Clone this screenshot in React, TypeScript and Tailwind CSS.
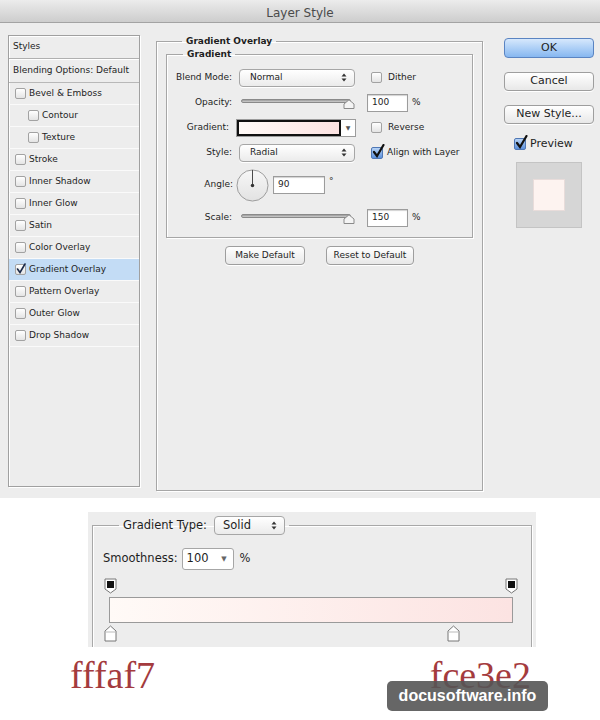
import React from "react";

const ui = "font-['Lucida_Grande','DejaVu_Sans',sans-serif]";

function Check({ on, blue }: { on?: boolean; blue?: boolean }) {
  return (
    <span
      className={
        blue
          ? "relative inline-block h-[12px] w-[12px] shrink-0 rounded-[2px] border border-[#4f77b5] bg-linear-to-b from-[#b7d3f5] to-[#5c90dc]"
          : "relative inline-block h-[11px] w-[11px] shrink-0 rounded-[2px] border border-[#a2a2a2] bg-linear-to-b from-white to-[#e4e4e4]"
      }
    >
      {on && blue && (
        <svg className="absolute -top-[4px] left-[0px]" width="13" height="14" viewBox="0 0 13 14">
          <path d="M2 8 L5 12 L11.5 1" stroke="#111" strokeWidth="2.2" fill="none" strokeLinecap="round" />
        </svg>
      )}
      {on && !blue && (
        <svg className="absolute -top-[2px] left-[0px]" width="10" height="11" viewBox="0 0 10 11">
          <path d="M1.5 6 L4 9.5 L9 1" stroke="#1a2a4a" strokeWidth="1.6" fill="none" strokeLinecap="round" />
        </svg>
      )}
    </span>
  );
}

function UpDown() {
  return (
    <svg width="6" height="9" viewBox="0 0 6 9">
      <path d="M0.5 3.5 L3 0.5 L5.5 3.5 Z" fill="#333" />
      <path d="M0.5 5.5 L3 8.5 L5.5 5.5 Z" fill="#333" />
    </svg>
  );
}

function Select({ label }: { label: string }) {
  return (
    <div className="flex h-[18px] w-[116px] items-center justify-between rounded-[4px] border border-[#a6a6a6] bg-linear-to-b from-white to-[#ebebeb] pl-[10px] pr-[7px] shadow-[0_1px_0_#fff]">
      <span>{label}</span>
      <UpDown />
    </div>
  );
}

function Slider() {
  return (
    <div className="relative h-[14px] w-[116px]">
      <div className="absolute left-[2px] right-[4px] top-[3px] h-[4px] rounded-[2px] border border-[#8a8a8a] bg-linear-to-b from-[#9a9a9a] to-[#d0d0d0]" />
      <svg className="absolute right-0 top-[3px]" width="12" height="10" viewBox="0 0 12 10">
        <path d="M1 9.5 L1 5 L6 0.8 L11 5 L11 9.5 Z" fill="#f4f4f4" stroke="#8a8a8a" />
      </svg>
    </div>
  );
}

function Field({ value, w }: { value: string; w: string }) {
  return (
    <div
      className={`flex h-[18px] items-center border border-[#9c9c9c] bg-white pl-[4px] shadow-[inset_0_1px_1px_rgba(0,0,0,0.18)] ${w}`}
    >
      {value}
    </div>
  );
}

function Label({ children }: { children: React.ReactNode }) {
  return <div className="w-[72px] shrink-0 pr-[7px] text-right">{children}</div>;
}

function Button({ children, w }: { children: React.ReactNode; w: string }) {
  return (
    <div
      className={`flex h-[19px] items-center justify-center rounded-[4px] border border-[#9e9e9e] bg-linear-to-b from-white to-[#e8e8e8] shadow-[0_1px_0_#fff] ${w}`}
    >
      {children}
    </div>
  );
}

const styleRows: { name: string; sub?: boolean; on?: boolean }[] = [
  { name: "Bevel & Emboss" },
  { name: "Contour", sub: true },
  { name: "Texture", sub: true },
  { name: "Stroke" },
  { name: "Inner Shadow" },
  { name: "Inner Glow" },
  { name: "Satin" },
  { name: "Color Overlay" },
  { name: "Gradient Overlay", on: true },
  { name: "Pattern Overlay" },
  { name: "Outer Glow" },
  { name: "Drop Shadow" },
];

function StopTop() {
  return (
    <svg width="13" height="16" viewBox="0 0 13 16">
      <path d="M1 1 H12 V11 L6.5 15 L1 11 Z" fill="#fff" stroke="#777" />
      <rect x="3" y="3" width="7" height="7" fill="#111" />
    </svg>
  );
}

function StopBottom() {
  return (
    <svg width="13" height="17" viewBox="0 0 13 17">
      <path d="M1 16 V6 L6.5 1 L12 6 V16 Z" fill="#fff" stroke="#777" />
      <path d="M1 7 H12" stroke="#bbb" />
    </svg>
  );
}

export default function App() {
  return (
    <div className={`relative h-[720px] w-[600px] overflow-hidden bg-white text-[#1e1e1e] ${ui}`}>
      {/* Dialog */}
      <div className="flex h-[498px] flex-col bg-[#ededed] text-[9px]">
        <div className="flex h-[23px] items-center justify-center border-b border-[#a3a3a3] bg-linear-to-b from-[#ececec] to-[#cdcdcd] pt-[3px] text-[12px] text-[#4a4a4a]">
          Layer Style
        </div>

        <div className="flex pl-[8px] pt-[12px]">
          {/* Styles list */}
          <div className="flex h-[452px] w-[132px] flex-col border border-[#a0a0a0] shadow-[inset_1px_1px_0_#fff,1px_1px_0_#fff]">
            <div className="flex h-[23px] items-center border-b border-[#b0b0b0] pl-[4px] shadow-[0_1px_0_#fff]">
              Styles
            </div>
            <div className="mt-[1px] flex h-[23px] items-center border-b border-[#b8b8b8] pl-[4px]">
              Blending Options: Default
            </div>
            {styleRows.map((r) => (
              <div
                key={r.name}
                className={`flex h-[22px] items-center gap-[3px] border-b border-[#fafafa] ${
                  r.sub ? "pl-[19px]" : "pl-[6px]"
                } ${r.on ? "bg-[#c3dcf5]" : ""}`}
              >
                <Check on={r.on} />
                <span>{r.name}</span>
              </div>
            ))}
          </div>

          {/* Gradient Overlay panel */}
          <fieldset className="ml-[16px] h-[456px] w-[327px] border border-[#a6a6a6] px-[9px] shadow-[inset_1px_1px_0_#fff,1px_1px_0_#fff]">
            <legend className="ml-[16px] px-[4px] font-bold leading-[12px]">Gradient Overlay</legend>
            <fieldset className="mt-[1px] border border-[#a6a6a6] pb-[7px] pt-[5px] shadow-[inset_1px_1px_0_#fff,1px_1px_0_#fff]">
              <legend className="ml-[16px] px-[4px] font-bold leading-[12px]">Gradient</legend>

              <div className="flex h-[25px] items-center">
                <Label>Blend Mode:</Label>
                <Select label="Normal" />
                <div className="ml-[16px] flex items-center gap-[6px]">
                  <Check />
                  <span>Dither</span>
                </div>
              </div>

              <div className="flex h-[25px] items-center">
                <Label>Opacity:</Label>
                <Slider />
                <div className="ml-[12px] flex items-center gap-[4px]">
                  <Field value="100" w="w-[41px]" />
                  <span>%</span>
                </div>
              </div>

              <div className="flex h-[25px] items-center">
                <div className="w-[69px] shrink-0 pr-[7px] text-right">Gradient:</div>
                <div className="flex h-[18px] w-[120px] items-center border border-[#9c9c9c] bg-white">
                  <div className="h-full flex-1 border-2 border-[#111] bg-linear-to-r from-[#fffaf7] to-[#fce3e2]" />
                  <div className="flex w-[14px] items-center justify-center text-[6px] text-[#555]">▼</div>
                </div>
                <div className="ml-[15px] flex items-center gap-[6px]">
                  <Check />
                  <span>Reverse</span>
                </div>
              </div>

              <div className="flex h-[25px] items-center">
                <Label>Style:</Label>
                <Select label="Radial" />
                <div className="ml-[16px] flex items-center gap-[4px]">
                  <Check on blue />
                  <span>Align with Layer</span>
                </div>
              </div>

              <div className="flex h-[40px] items-center">
                <div className="w-[69px] shrink-0 pr-[3px] text-right">Angle:</div>
                <svg width="33" height="33" viewBox="0 0 34 34">
                  <defs>
                    <linearGradient id="dial" x1="0" y1="0" x2="0" y2="1">
                      <stop offset="0" stopColor="#f7f7f7" />
                      <stop offset="1" stopColor="#e2e2e2" />
                    </linearGradient>
                  </defs>
                  <circle cx="17" cy="17" r="16" fill="url(#dial)" stroke="#9a9a9a" />
                  <line x1="17" y1="17" x2="17" y2="1" stroke="#444" strokeWidth="1" />
                  <circle cx="17" cy="17" r="1.8" fill="#333" />
                </svg>
                <div className="ml-[4px] flex items-start gap-[4px]">
                  <Field value="90" w="w-[52px]" />
                  <span className="leading-[10px]">°</span>
                </div>
              </div>

              <div className="flex h-[25px] items-center">
                <Label>Scale:</Label>
                <Slider />
                <div className="ml-[12px] flex items-center gap-[4px]">
                  <Field value="150" w="w-[41px]" />
                  <span>%</span>
                </div>
              </div>
            </fieldset>

            <div className="mt-[8px] flex justify-center gap-[21px]">
              <Button w="w-[80px]">Make Default</Button>
              <Button w="w-[88px]">Reset to Default</Button>
            </div>
          </fieldset>

          {/* Buttons */}
          <div className="ml-[21px] mt-[3px] flex w-[90px] flex-col text-[11px]">
            <div className="flex h-[20px] items-center justify-center rounded-[4px] border border-[#5a84c2] bg-linear-to-b from-[#d6e8fc] to-[#86b7f0]">
              OK
            </div>
            <div className="mt-[14px]">
              <Button w="w-[90px]">Cancel</Button>
            </div>
            <div className="mt-[14px]">
              <Button w="w-[90px]">New Style...</Button>
            </div>
            <div className="mt-[12px] flex items-center gap-[4px] pl-[10px]">
              <Check on blue />
              <span>Preview</span>
            </div>
            <div className="ml-[12px] mt-[9px] flex h-[66px] w-[66px] items-center justify-center border border-[#c4c4c4] bg-[#d6d6d6]">
              <div className="h-[32px] w-[32px] border border-[#e8dcda] bg-[#fdf3f0]" />
            </div>
          </div>
        </div>
      </div>

      {/* Gradient editor crop */}
      <div className="ml-[88px] mt-[14px] h-[135px] w-[448px] overflow-hidden bg-[#ededed] text-[11.5px]">
        <fieldset className="mx-[4px] mt-[4px] h-[160px] border border-[#a8a8a8] pl-[10px] shadow-[inset_1px_1px_0_#fff,1px_1px_0_#fff]">
          <legend className="ml-[16px] flex items-center gap-[7px] px-[4px]">
            <span>Gradient Type:</span>
            <span className="flex h-[19px] w-[71px] items-center justify-between rounded-[4px] border border-[#a6a6a6] bg-linear-to-b from-white to-[#ebebeb] pl-[8px] pr-[7px]">
              Solid
              <UpDown />
            </span>
          </legend>
          <div className="mt-[13px] flex items-center">
            <span>Smoothness:</span>
            <span className="ml-[4px] flex h-[22px] w-[52px] items-center justify-between rounded-[3px] border border-[#a6a6a6] bg-white pl-[4px] pr-[6px]">
              100
              <span className="text-[7px] text-[#666]">▼</span>
            </span>
            <span className="ml-[6px]">%</span>
          </div>
          <div className="relative ml-[1px] mt-[8px] h-[64px] w-[414px]">
            <div className="flex justify-between">
              <StopTop />
              <StopTop />
            </div>
            <div className="mx-[5px] mt-[3px] h-[26px] border border-[#9a9a9a] bg-linear-to-r from-[#fffaf7] to-[#fce3e2]" />
            <div className="absolute left-0 top-[47px]">
              <StopBottom />
            </div>
            <div className="absolute left-[343px] top-[47px]">
              <StopBottom />
            </div>
          </div>
        </fieldset>
      </div>

      {/* Hex labels */}
      <div className="mt-[6px] flex font-['Liberation_Serif',serif] text-[38px] leading-[44px] text-[#a43b3e]">
        <span className="ml-[70px]">fffaf7</span>
        <span className="ml-auto mr-[69px]">fce3e2</span>
      </div>

      <div className="absolute left-[387px] top-[681px] flex h-[30px] w-[161px] items-center justify-center rounded-[5px] bg-[#555]/90 font-['Liberation_Sans',sans-serif] text-[16px] font-bold text-white">
        docusoftware.info
      </div>
    </div>
  );
}
